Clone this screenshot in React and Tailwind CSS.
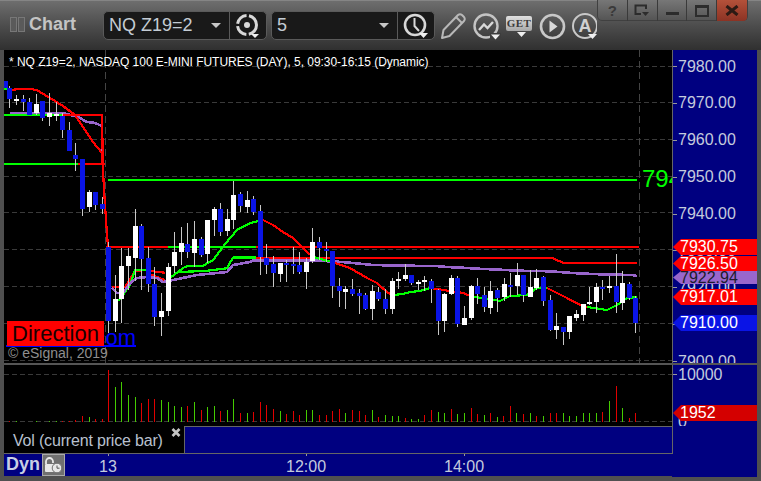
import React from "react";

const sans = { fontFamily: '"Liberation Sans", Arial, sans-serif' };

// [x, colour, wickTop, bodyTop, bodyBottom, wickBottom]  w = white, b = blue
const candles = [
  [5,"b",81,81,88,88],[9.5,"b",86,88,99,108],[16.5,"w",95,99,101,105],[23.5,"b",95,99,102,111],[29.5,"b",98,102,115,115],[36.5,"w",94,104,113,115],
  [42.5,"b",101,101,118,121],[49.5,"w",93,113,117,126],[56.5,"w",102,114,116,121],[62.5,"b",113,116,130,138],[69.5,"b",122,130,151,151],[75.5,"b",143,155,159,171],
  [82.5,"b",159,159,209,216],[89.5,"w",190,192,207,212],[95.5,"b",192,192,205,210],[102.5,"b",197,204,209,214],[108.5,"b",242,247,321,333],[115.5,"w",275,299,321,332],
  [121.5,"w",248,266,299,323],[128.5,"w",248,256,266,290],[135.5,"w",209,226,258,281],[141.5,"b",224,226,259,290],[148.5,"b",247,258,284,292],[154.5,"b",267,284,317,326],
  [161.5,"w",293,311,317,336],[168.5,"w",263,267,311,316],[174.5,"w",232,252,266,273],[181.5,"w",227,243,252,265],[187.5,"b",223,244,252,258],[194.5,"w",221,239,253,267],
  [201.5,"b",237,239,255,257],[207.5,"w",220,220,254,263],[214.5,"w",207,209,220,236],[220.5,"b",203,209,232,236],[227.5,"w",209,219,231,236],[233.5,"w",181,195,220,229],
  [240.5,"b",192,194,206,212],[247.5,"w",191,200,207,213],[253.5,"b",196,199,212,215],[260.5,"b",205,211,257,275],[266.5,"b",244,258,265,274],[273.5,"b",256,264,273,287],
  [280.5,"w",263,263,274,282],[286.5,"b",260,263,265,282],[293.5,"b",247,264,266,274],[299.5,"b",252,265,272,274],[306.5,"w",258,262,272,289],[312.5,"w",228,242,261,263],
  [319.5,"b",237,242,248,260],[326.5,"b",242,249,251,262],[332.5,"b",251,251,286,298],[339.5,"b",278,286,291,307],[345.5,"w",286,289,292,309],[352.5,"b",279,289,294,296],
  [359.5,"b",289,293,296,314],[365.5,"b",293,295,309,310],[372.5,"w",285,291,309,320],[378.5,"b",287,292,299,301],[385.5,"b",289,299,309,314],[392.5,"w",278,281,309,314],
  [398.5,"w",272,279,281,289],[405.5,"w",264,275,279,281],[411.5,"b",275,275,283,285],[418.5,"w",280,282,284,290],[424.5,"w",276,280,282,291],[431.5,"b",279,281,289,303],
  [438.5,"b",289,290,321,335],[444.5,"w",293,294,321,332],[451.5,"w",275,278,294,295],[457.5,"b",276,278,324,327],[464.5,"w",306,318,325,325],[471.5,"w",285,286,318,320],
  [477.5,"b",278,286,294,304],[484.5,"b",287,295,307,312],[490.5,"w",281,291,308,314],[497.5,"b",288,290,298,312],[504.5,"w",278,284,297,301],[510.5,"b",273,285,287,297],
  [517.5,"w",263,275,286,295],[523.5,"b",275,275,295,302],[530.5,"w",270,287,297,297],[536.5,"w",269,278,288,290],[543.5,"b",276,277,301,306],[550.5,"b",295,300,330,331],
  [556.5,"w",313,326,330,339],[563.5,"b",327,327,332,345],[569.5,"w",316,316,332,339],[576.5,"w",310,314,318,321],[583.5,"w",304,304,315,321],[589.5,"w",287,302,304,305],
  [596.5,"w",283,287,302,313],[602.5,"b",280,287,289,300],[609.5,"w",276,286,288,293],[616.5,"b",254,286,302,313],[622.5,"w",271,283,303,310],[629.5,"b",282,284,298,300],[635.5,"b",296,298,323,333],
];

// [x, top, r|g]
const vol = [
  [9.5,421,"r"],[16.5,421,"g"],[36.5,421,"g"],[49.5,421,"g"],[56.5,421,"g"],[62.5,421,"r"],[69.5,421,"r"],[75.5,420,"r"],[82.5,416,"r"],[89.5,417,"g"],[95.5,419,"r"],[102.5,419,"r"],
  [108.5,370,"r"],[115.5,387,"g"],[121.5,382,"g"],[128.5,395,"g"],[135.5,397,"g"],[141.5,403,"r"],[148.5,399,"r"],[154.5,399,"r"],[161.5,400,"g"],[168.5,402,"g"],
  [174.5,406,"g"],[181.5,407,"g"],[187.5,406,"r"],[194.5,402,"g"],[201.5,410,"r"],[207.5,407,"g"],[214.5,406,"g"],[220.5,411,"r"],[227.5,410,"g"],[233.5,399,"g"],
  [240.5,413,"r"],[247.5,413,"g"],[253.5,412,"r"],[260.5,402,"r"],[266.5,405,"r"],[273.5,409,"r"],[280.5,411,"g"],[286.5,414,"r"],[293.5,411,"r"],[299.5,415,"r"],
  [306.5,410,"g"],[312.5,410,"g"],[319.5,415,"r"],[326.5,415,"r"],[332.5,411,"r"],[339.5,409,"r"],[345.5,413,"g"],[352.5,410,"r"],[359.5,411,"r"],[365.5,415,"r"],
  [372.5,410,"g"],[378.5,417,"r"],[385.5,415,"g"],[392.5,416,"g"],[398.5,416,"g"],[405.5,418,"r"],[411.5,419,"g"],[418.5,419,"g"],[424.5,415,"r"],[431.5,410,"r"],
  [438.5,412,"g"],[444.5,413,"g"],[451.5,409,"r"],[457.5,414,"g"],[464.5,413,"g"],[471.5,408,"r"],[477.5,414,"r"],[484.5,415,"g"],[490.5,413,"r"],[497.5,417,"g"],
  [503.5,416,"r"],[510.5,406,"r"],[516.5,413,"g"],[523.5,414,"r"],[530.5,413,"g"],[536.5,416,"r"],[543.5,416,"g"],[550.5,413,"r"],[556.5,413,"r"],[563.5,413,"g"],
  [569.5,416,"g"],[576.5,416,"g"],[583.5,413,"g"],[589.5,413,"g"],[596.5,413,"g"],[602.5,412,"r"],[609.5,401,"g"],[616.5,386,"r"],[622.5,408,"g"],[629.5,418,"r"],[635.5,413,"r"],
];

const P = ({ d, c, w = 2.2 }) => <polyline points={d} fill="none" stroke={c} strokeWidth={w} strokeLinejoin="round" shapeRendering="crispEdges" />;
const GREEN = "#00ff00", RED = "#ff0000", PUR = "#9966cc";

function PriceSvg() {
  return (
    <svg viewBox="4 50 668 313" className="block w-[668px] h-[313px]">
      {[66, 102.5, 139.5, 176.5, 212.5, 249.5, 286.5, 323.5, 360.5].map((y) => (
        <line key={y} x1="4" x2="672" y1={y} y2={y} stroke="#3a3a3a" strokeDasharray="5 3" shapeRendering="crispEdges" />
      ))}
      {[105.5, 639.5].map((x) => (
        <line key={x} x1={x} x2={x} y1="50" y2="363" stroke="#444" strokeDasharray="7 4" shapeRendering="crispEdges" />
      ))}
      <P d="4,89 12,89" c={GREEN} />
      <P d="4,115 63,115" c={GREEN} />
      <P d="4,164 78,164" c={GREEN} />
      <P d="78,164 105,164" c={RED} />
      <P d="108,180 637,180" c={GREEN} />
      <P d="10,113 63,113 78,117 87,122 95,123 102,126 102,153" c={PUR} w={2.6} />
      <P d="63,115 102,115 103,170 104,190 106,220 108,247" c={RED} />
      <P d="12,90 20,88.7 32,89 38,90.7 50,98 63,106 75,115 83,127 93,142 102,153 102,164" c={RED} />
      <P d="106,247 168,247" c={RED} />
      <P d="168,247 256,247" c={GREEN} />
      <P d="256,247 639,247" c={RED} />
      <P d="112,287 125,287 135,271 147,270 157,272 165,272.7" c={RED} />
      <P d="147,273 157,277 165,280" c={RED} />
      <P d="118,301 123,295 130,285 135,270 148,270" c={GREEN} />
      <P d="177,272 205,271 227,268.3 233,257.5 256,257.5" c={GREEN} />
      <P d="256,258 552,258 563,262.7 637,262.7" c={RED} />
      <P d="112,288 117,293 123,293 130,283 137,278 147,277 157,278 163,282 173,280 197,275 227,272 233,265 250,262 253,260.7 317,260.7 337,261.7 350,262.7 360,263.7 373,265 403,265.7 435,266 447,267 462,267.7 478,268.7 500,269.7 518,270.7 550,271.3 577,273.3 600,274.3 632,275 637,276" c={PUR} w={2.6} />
      <P d="170,278 183,268 188,265.7 203,265.7 213,260 227,241.7 237,230 250,223 263,220" c={GREEN} />
      <P d="263,220 273,225 283,232 293,238 300,245 310,255" c={RED} />
      <P d="310,255 317,258 327,261 335,262" c={GREEN} />
      <P d="335,263 350,268 367,278 377,283 388,293 393,295" c={RED} />
      <P d="393,295 403,294 410,292 420,291 427,289 430,288" c={GREEN} />
      <P d="430,288 450,291 463,293 473,297" c={RED} />
      <P d="473,297 483,298 500,301 510,296 527,295 537,288 547,288" c={GREEN} />
      <P d="547,288 567,298 580,305 587,307" c={RED} />
      <P d="587,307 607,310 617,305 627,298 637,297" c={GREEN} />
      {candles.map(([x, col, wt, bt, bb, wb]) => (
        <g key={x} shapeRendering="crispEdges">
          <line x1={x} x2={x} y1={wt} y2={wb} stroke="#c8c8c8" />
          <rect x={x - 2.5} y={bt} width="5" height={Math.max(bb - bt, 2)} fill={col === "w" ? "#ffffff" : "#0a14e6"} />
        </g>
      ))}
    </svg>
  );
}

function VolSvg() {
  return (
    <svg viewBox="4 365 668 61" className="block w-[668px] h-[61px]">
      <line x1="4" x2="672" y1="374.5" y2="374.5" stroke="#3a3a3a" strokeDasharray="5 3" shapeRendering="crispEdges" />
      <line x1="4" x2="672" y1="421.5" y2="421.5" stroke="#3a3a3a" strokeDasharray="5 3" shapeRendering="crispEdges" />
      {vol.map(([x, t, c]) => (
        <line key={x} x1={x} x2={x} y1={t} y2="422" stroke={c === "r" ? "#e00000" : "#44cc00"} shapeRendering="crispEdges" />
      ))}
    </svg>
  );
}

const Tag = ({ top, bg, fg, h = "h-[16px]", children }) => (
  <div
    className={`absolute left-0 w-[85px] flex items-center pl-[7px] text-[16px] ${h}`}
    style={{ top, background: bg, color: fg, clipPath: "polygon(0 50%, 8px 0, 100% 0, 100% 100%, 8px 100%)" }}
  >
    {children}
  </div>
);

const WinBtn = ({ children, red }) => (
  <div className={`w-[30px] h-[21px] flex items-center justify-center border-r border-[#3a3a3a] ${red ? "bg-gradient-to-b from-[#b4513a] to-[#8c3324] rounded-br-[4px] border-r-0" : ""}`}>
    {children}
  </div>
);

export default function App() {
  return (
    <div className="w-[761px] h-[481px] overflow-hidden flex flex-col bg-[#4f4f4f]" style={sans}>
      {/* header */}
      <div className="h-[50px] flex items-start bg-gradient-to-b from-[#6e6e6e] via-[#4d4d4d] to-[#303030] border-t border-[#858585]">
        <div className="flex gap-[1px] ml-[10px] mt-[16px]">
          <div className="w-[7px] h-[15px] border border-[#777] bg-[#5a5a5a]" />
          <div className="w-[7px] h-[15px] border border-[#777] bg-[#5a5a5a]" />
        </div>
        <div className="ml-[4px] mt-[13px] text-[18px] leading-[21px] font-bold text-[#c4c4c4]">Chart</div>
        <div className="ml-[27px] mt-[10px] w-[164px] h-[29px] flex bg-[#191919] border border-[#5a5a5a] rounded-[5px]">
          <div className="flex-1 flex items-center justify-between pl-[5px] pr-[8px] text-[18px] text-[#c4ccd4]">
            <span>NQ Z19=2</span>
            <svg width="10" height="6"><polygon points="0,0 10,0 5,5" fill="#c8c8c8" /></svg>
          </div>
          <div className="w-[37px] border-l border-[#5a5a5a] flex items-center justify-center">
            <svg width="28" height="28" viewBox="0 0 28 28" fill="none">
              <circle cx="13" cy="13" r="9.5" stroke="#d8d8d8" strokeWidth="3" strokeDasharray="13 2.5" />
              <circle cx="13" cy="13" r="3" fill="#d8d8d8" />
              <polygon points="17,22 25,22 21,26" fill="#f0f0f0" />
            </svg>
          </div>
        </div>
        <div className="ml-[4px] mt-[10px] w-[164px] h-[29px] flex bg-[#191919] border border-[#5a5a5a] rounded-[5px]">
          <div className="flex-1 flex items-center justify-between pl-[5px] pr-[8px] text-[18px] text-[#c4ccd4]">
            <span>5</span>
            <svg width="10" height="6"><polygon points="0,0 10,0 5,5" fill="#c8c8c8" /></svg>
          </div>
          <div className="w-[37px] border-l border-[#5a5a5a] flex items-center justify-center">
            <svg width="28" height="28" viewBox="0 0 28 28" fill="none">
              <circle cx="13" cy="13" r="10" stroke="#d8d8d8" strokeWidth="2.6" />
              <path d="M12.5 6 V14 L17 19" stroke="#d8d8d8" strokeWidth="2" />
              <polygon points="17,21 26,21 21.5,26" fill="#f0f0f0" />
            </svg>
          </div>
        </div>
        <svg className="ml-[5px] mt-[10px]" width="26" height="30" viewBox="0 0 26 30" fill="none" stroke="#b8b8b8" strokeWidth="2" strokeLinejoin="round">
          <path d="M2 27 L3.5 19 L18 4 Q20 2.5 22 4 L24 6 Q25.5 8 24 10 L9.5 25 Z" />
          <path d="M16 6 L22 12" />
        </svg>
        <svg className="ml-[7px] mt-[12px]" width="28" height="28" viewBox="0 0 28 28" fill="none">
          <circle cx="13" cy="13" r="11.5" stroke="#c4c4c4" strokeWidth="2.4" />
          <path d="M6 17 L11 11.5 L14.5 15 L20 9" stroke="#d8d8d8" strokeWidth="2.4" />
          <rect x="17" y="20" width="11" height="8" fill="#3d3d3d" />
          <polygon points="18,21.5 27,21.5 22.5,26.5" fill="#f0f0f0" />
        </svg>
        <div className="ml-[5px] mt-[15px] w-[26px] flex flex-col items-center">
          <div className="w-[26px] h-[15px] rounded-[2px] bg-gradient-to-b from-[#e0e0e0] to-[#a8a8a8] flex items-center justify-center text-[11px] leading-[15px] font-bold tracking-[0.5px] text-[#3a3a3a]" style={{ fontFamily: '"Liberation Serif", serif' }}>GET</div>
          <svg className="ml-[5px] mt-[1px]" width="9" height="5"><polygon points="0,0 9,0 4.5,5" fill="#f0f0f0" /></svg>
        </div>
        <svg className="ml-[7px] mt-[12px]" width="27" height="27" viewBox="0 0 27 27" fill="none">
          <circle cx="13.5" cy="13.5" r="11.5" stroke="#c8c8c8" strokeWidth="2.6" />
          <polygon points="10.5,7.5 18.5,13.5 10.5,19.5" fill="#d8d8d8" />
        </svg>
        <div className="ml-[6px] mt-[12px] w-[25px] h-[27px] overflow-hidden relative flex items-start">
          <div className="w-[26px] h-[26px] shrink-0 rounded-full border-[2.5px] border-[#c8c8c8] flex items-center justify-center text-[18px] leading-none font-bold text-[#d0d0d0]">A</div>
          <svg className="absolute right-0 bottom-0" width="9" height="6"><polygon points="0,0 9,0 4.5,5" fill="#f0f0f0" /></svg>
        </div>
        {/* window buttons */}
        <div className="w-[151px] h-[21px] -mt-px flex shrink-0 rounded-b-[5px] bg-gradient-to-b from-[#777777] to-[#555555] border-b border-x border-[#404040] text-[#2f2f2f]">
          <WinBtn><span className="text-[15px] leading-none font-bold text-[#3a3a3a]">?</span></WinBtn>
          <WinBtn>
            <svg width="16" height="13" fill="none"><path d="M7 10 H1.5 V1.5 H12 V5" stroke="#2c2c2c" strokeWidth="2" /><polygon points="8,8 15,8 11.5,12" fill="#2c2c2c" /></svg>
          </WinBtn>
          <WinBtn><div className="w-[13px] h-[3px] mt-[5px] bg-[#2c2c2c]" /></WinBtn>
          <WinBtn><div className="w-[14px] h-[12px] border-[2px] border-t-[3px] border-[#2c2c2c]" /></WinBtn>
          <WinBtn red>
            <svg width="14" height="11"><path d="M1.5 1 L12.5 10 M12.5 1 L1.5 10" stroke="#2c1a14" strokeWidth="3" /></svg>
          </WinBtn>
        </div>
      </div>

      {/* body */}
      <div className="flex pl-[4px] pr-[4px] h-[427px]">
        <div className="w-[668px] flex flex-col">
          <div className="relative h-[313px] bg-black overflow-hidden">
            <PriceSvg />
            <div className="absolute left-[5px] top-[5px] text-[12px] leading-[14px] whitespace-nowrap tracking-[-0.04px] text-white">
              * NQ Z19=2, NASDAQ 100 E-MINI FUTURES (DAY), 5, 09:30-16:15 (Dynamic)
            </div>
            <div className="absolute left-[638px] top-[116px] w-[30px] overflow-hidden text-[24px] leading-[26px] text-[#00ff00]">794</div>
            <div className="absolute left-[2px] top-[271px] w-[130px] h-[26px] border-b-2 border-[#0000ff] text-right text-[22px] leading-[33px] text-[#0000ff]">.com</div>
            <div className="absolute left-[3px] top-[271px] w-[97px] h-[25px] bg-[#ff0000] text-center text-[22px] leading-[25px] text-[#1a0000]">Direction</div>
            <div className="absolute left-[4px] top-[295px] text-[14px] leading-[16px] text-[#8f8f8f]">© eSignal, 2019</div>
          </div>
          <div className="h-[2px] bg-[#555]" />
          <div className="h-[61px] bg-black"><VolSvg /></div>
          <div className="h-[28px] flex border-b border-[#666]">
            <div className="w-[180px] bg-black flex items-start pl-[9px]">
              <span className="text-[16px] leading-[28px] mt-[1px] whitespace-nowrap tracking-[-0.18px] text-[#b9c1cf]">Vol (current price bar)</span>
              <svg className="ml-[8px] mt-[2px]" width="10" height="9"><path d="M1.5 1 L8.5 8 M8.5 1 L1.5 8" stroke="#c4c4c4" strokeWidth="2.6" /></svg>
            </div>
            <div className="flex-1 bg-[#000080] border-l border-t border-[#666]" />
          </div>
          <div className="h-[22px] flex bg-[#000080] text-[16px] text-[#c4cbdd]">
            <div className="w-[38px] pl-[2px] text-[18px] leading-[21px] font-bold text-[#c8cfe4]">Dyn</div>
            <div className="w-[23px] h-[22px] bg-[#707070] border border-[#aaa] flex items-center justify-center">
              <svg width="19" height="18" viewBox="0 0 19 18" fill="none">
                <path d="M2 8 V5.5 A3.5 3.5 0 0 1 9 5.5 V7" stroke="#e8e8e8" strokeWidth="1.8" />
                <rect x="1" y="8" width="9" height="8" rx="1" fill="#e8e8e8" />
                <circle cx="13" cy="12" r="4.8" fill="#e8e8e8" stroke="#707070" />
                <path d="M13 9.5 V12.2 H15.5" stroke="#555" />
              </svg>
            </div>
            <div className="w-[23px]" />
            <div className="w-[40px] flex flex-col items-center">
              <div className="w-px h-[3px] bg-[#999]" />
              <span className="leading-[19px] mt-[1px]">13</span>
            </div>
            <div className="w-[158px]" />
            <div className="w-[40px] flex flex-col items-center">
              <div className="w-px h-[3px] bg-[#999]" />
              <span className="leading-[19px] mt-[1px]">12:00</span>
            </div>
            <div className="w-[118px]" />
            <div className="w-[40px] flex flex-col items-center">
              <div className="w-px h-[3px] bg-[#999]" />
              <span className="leading-[19px] mt-[1px]">14:00</span>
            </div>
          </div>
        </div>

        {/* right axis */}
        <div className="w-[85px] flex flex-col bg-[#000080] text-[#c4cbdd]">
          <div className="relative h-[313px] overflow-hidden border-l border-[#666] pt-[16px]">
            {["7980.00","7970.00","7960.00","7950.00","7940.00","7930.00","7920.00","7910.00","7900.00"].map((t) => (
              <div key={t} className="h-[36.9px]">
                <div className="h-px flex items-center">
                  <div className="w-[4px] h-px bg-[#999] mr-px" />
                  <span className="text-[16px] leading-[18px]">{t}</span>
                </div>
              </div>
            ))}
            <Tag top={189} bg="#ff0000" fg="#fff">7930.75</Tag>
            <Tag top={206} bg="#ff0000" fg="#fff" h="h-[15px]">7926.50</Tag>
            <Tag top={221} bg="#9966cc" fg="#1c1c2c" h="h-[13px]">7922.94</Tag>
            <Tag top={239} bg="#ff0000" fg="#fff">7917.01</Tag>
            <Tag top={265} bg="#0a14e6" fg="#fff">7910.00</Tag>
          </div>
          <div className="h-[2px] bg-[#555]" />
          <div className="relative h-[61px] overflow-hidden border-l border-[#666] pt-[9px]">
            <div className="h-px flex items-center">
              <div className="w-[4px] h-px bg-[#999] mr-px" />
              <span className="text-[16px] leading-[18px]">10000</span>
            </div>
            <div className="absolute left-[5px] top-[48px] text-[16px] leading-[18px]">0</div>
            <Tag top={40} bg="#d40000" fg="#fff">1952</Tag>
          </div>
          <div className="h-[28px] border-l border-[#666]" />
          <div className="h-[22px]" />
        </div>
      </div>
      <div className="flex-1 bg-[#505050]" />
    </div>
  );
}
